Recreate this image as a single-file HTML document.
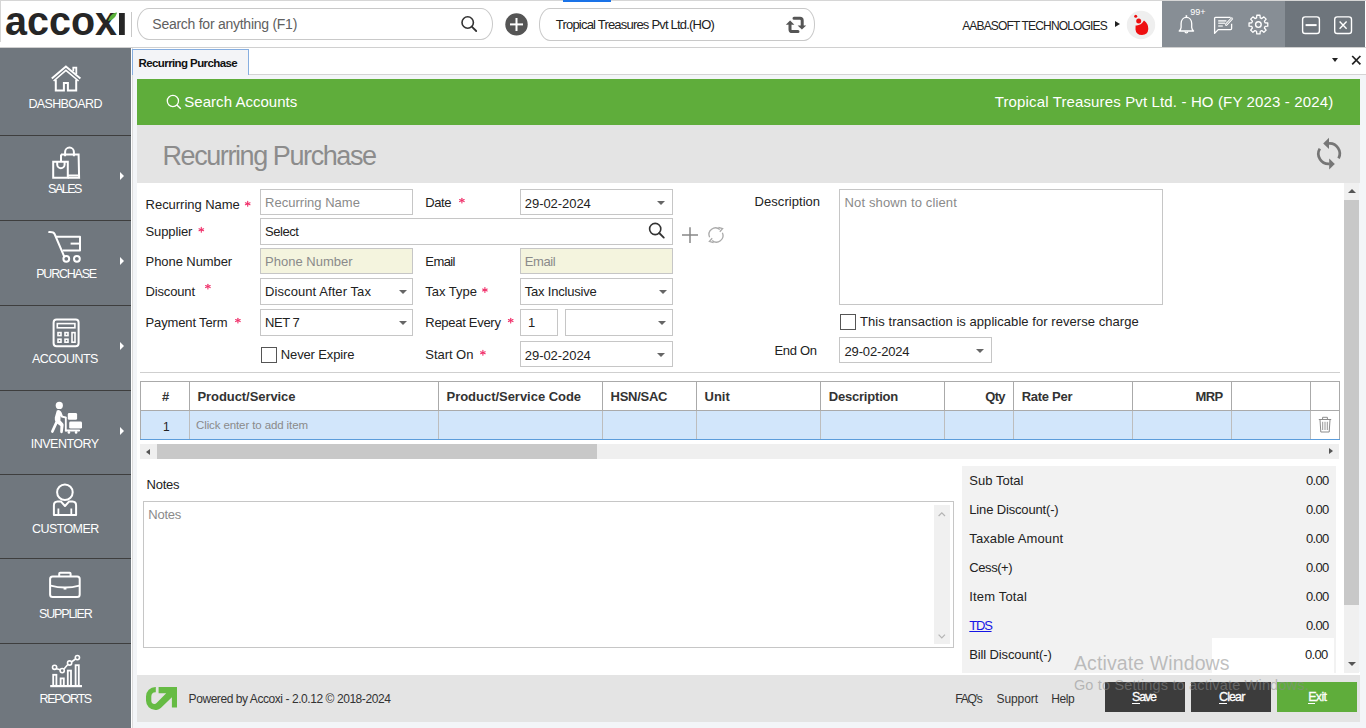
<!DOCTYPE html>
<html><head><meta charset="utf-8">
<style>
*{box-sizing:border-box;margin:0;padding:0}
html,body{width:1366px;height:728px;overflow:hidden;background:#f3f5f8;font-family:"Liberation Sans",sans-serif;color:#222;position:relative}
.a{position:absolute}
.t{position:absolute;white-space:nowrap;line-height:1}
svg{position:absolute;left:0;top:0;overflow:visible}
</style></head><body>
<div class="a" style="left:0px;top:0px;width:1366px;height:47px;background:#fff;"></div>
<div class="a" style="left:0px;top:0px;width:1366px;height:1px;background:#d6d6d6;"></div>
<div class="a" style="left:0px;top:47px;width:1366px;height:1px;background:#d0d0d0;"></div>
<div class="a" style="left:0px;top:0px;width:1px;height:42px;background:#d6d6d6;"></div>
<svg width="1366" height="48" viewBox="0 0 1366 48">
<text x="5" y="35" font-family="Liberation Sans" font-weight="bold" font-size="41" fill="#262626" textLength="112" lengthAdjust="spacingAndGlyphs">accox</text>
<rect x="119" y="13" width="5.8" height="22" fill="#262626"/>
<path d="M108 21 C110 15 113 13 117 12.5 C116 17 113 20 108 21Z" fill="#5bb33a"/>
</svg>
<div class="a" style="left:131px;top:12px;width:1px;height:25px;background:#c8c8c8;"></div>
<div class="a" style="left:137px;top:8px;width:356px;height:32px;background:#fff;border:1px solid #c9c9c9;border-radius:12px / 16px;"></div>
<div class="t" style="left:152.30px;top:17.00px;font-size:14px;color:#606060;letter-spacing:-0.259px;">Search for anything (F1)</div>
<svg width="1366" height="48"><circle cx="467.7" cy="22.5" r="5.7" fill="none" stroke="#333" stroke-width="1.6"/><line x1="471.8" y1="26.6" x2="476.2" y2="31" stroke="#333" stroke-width="1.8" stroke-linecap="round"/>
<circle cx="516.5" cy="24.4" r="11.2" fill="#555"/><rect x="510" y="23.4" width="13" height="2" fill="#fff"/><rect x="515.5" y="18" width="2" height="13" fill="#fff"/>
<path d="M794 18.2 H800 Q802.2 18.2 802.2 20.4 V26" fill="none" stroke="#555" stroke-width="3" stroke-linecap="round"/>
<path d="M797.6 25.4 H806.2 L801.9 29.4 Z" fill="#555"/>
<path d="M790 24.8 V29.4 Q790 31.6 792.2 31.6 H798" fill="none" stroke="#555" stroke-width="3" stroke-linecap="round"/>
<path d="M785.8 24.6 H794.4 L790.1 20.4 Z" fill="#555"/>
</svg>
<div class="a" style="left:539px;top:8px;width:276px;height:33px;background:#fff;border:1px solid #c9c9c9;border-radius:11px / 16px;"></div>
<svg width="1366" height="48" style="z-index:1">
<path d="M794 18.2 H800 Q802.2 18.2 802.2 20.4 V26" fill="none" stroke="#555" stroke-width="3" stroke-linecap="round"/>
<path d="M797.6 25.4 H806.2 L801.9 29.6 Z" fill="#555"/>
<path d="M790 25 V29.4 Q790 31.6 792.2 31.6 H798" fill="none" stroke="#555" stroke-width="3" stroke-linecap="round"/>
<path d="M785.8 24.8 H794.4 L790.1 20.4 Z" fill="#555"/>
</svg>
<div class="t" style="left:555.80px;top:18.00px;font-size:13px;color:#222;letter-spacing:-0.800px;">Tropical Treasures Pvt Ltd.(HO)</div>
<div class="a" style="left:563px;top:0px;width:48px;height:2px;background:#1a73e8;"></div>
<div class="t" style="left:962.20px;top:20.00px;font-size:12px;color:#222;letter-spacing:-0.833px;">AABASOFT TECHNOLOGIES</div>
<div class="a" style="left:1115px;top:21.4px;width:0;height:0;border-left:5px solid #222;border-top:3.8px solid transparent;border-bottom:3.8px solid transparent"></div>
<svg width="1366" height="48">
<circle cx="1141" cy="25" r="14.2" fill="#efefef"/>
<path d="M1135.6 25.4 Q1140.4 26.2 1144 20.6 Q1148.5 23.8 1148.3 29 Q1147.9 34.8 1142 35 Q1135.9 34.8 1135.5 29.4 Z" fill="#ee0f10"/>
<circle cx="1138.7" cy="20.9" r="2.5" fill="#ee0f10"/>
<circle cx="1135.7" cy="16.3" r="1.5" fill="#ee0f10"/>
</svg>
<div class="a" style="left:1162px;top:1px;width:123px;height:46px;background:#878e95;"></div>
<div class="a" style="left:1285px;top:1px;width:80px;height:46px;background:#6e757c;"></div>
<div class="t" style="left:1190.20px;top:8.00px;font-size:9px;color:#fff;letter-spacing:0.018px;">99+</div>
<svg width="1366" height="48" fill="none" stroke="#fff" stroke-width="1.4">
<path d="M1179.2 31 Q1180.9 29.8 1181.1 27.4 V23.6 C1181.1 19.9 1183.4 17.3 1186.4 17.3 C1189.4 17.3 1191.7 19.9 1191.7 23.6 V27.4 Q1191.9 29.8 1193.6 31 Z" stroke-linejoin="round" stroke-width="1.3"/>
<path d="M1186.4 15.2 V17.3" stroke-width="1.6"/>
<path d="M1185 31.4 A1.4 1.4 0 0 0 1187.8 31.4" stroke-width="1.2"/>
<path d="M1231.6 23.8 V28.6 Q1231.6 29.6 1230.6 29.6 H1218.2 L1214.6 33.4 V18.2 Q1214.6 17.3 1215.5 17.3 H1230.6" stroke-linejoin="round" stroke-width="1.3"/>
<path d="M1218.2 20.9 H1226.4 M1218.2 23.3 H1225.2 M1218.2 26 H1222.8" stroke="#e4e6e8" stroke-width="1.6"/>
<path d="M1226.2 24.6 L1231.8 18.6" stroke-width="2.6" stroke-linecap="round"/>
<path d="M1226.2 24.6 L1231.8 18.6" stroke="#878e95" stroke-width="0.9" stroke-linecap="round"/>
<circle cx="1258.4" cy="24.6" r="2.8"/>
<path d="M1256.56 17.95 L1256.79 15.24 L1260.01 15.24 L1260.24 17.95 L1261.80 18.60 L1263.88 16.84 L1266.16 19.12 L1264.40 21.20 L1265.05 22.76 L1267.76 22.99 L1267.76 26.21 L1265.05 26.44 L1264.40 28.00 L1266.16 30.08 L1263.88 32.36 L1261.80 30.60 L1260.24 31.25 L1260.01 33.96 L1256.79 33.96 L1256.56 31.25 L1255.00 30.60 L1252.92 32.36 L1250.64 30.08 L1252.40 28.00 L1251.75 26.44 L1249.04 26.21 L1249.04 22.99 L1251.75 22.76 L1252.40 21.20 L1250.64 19.12 L1252.92 16.84 L1255.00 18.60 Z" stroke-linejoin="round" stroke-width="1.3"/>
<rect x="1302.6" y="16.9" width="16.8" height="16.6" rx="2.6"/>
<path d="M1305.6 25.1 H1316.6" stroke-width="2"/>
<rect x="1334.7" y="16.9" width="16.8" height="16.6" rx="2.6"/>
<path d="M1339.6 21.6 L1346.6 28.8 M1346.6 21.6 L1339.6 28.8" stroke-width="1.4"/>
</svg>
<div class="a" style="left:0px;top:48px;width:131px;height:680px;background:#70777e;"></div>
<div class="a" style="left:131px;top:48px;width:1px;height:680px;background:#fff;"></div>
<div class="a" style="left:132px;top:48px;width:1px;height:680px;background:#dcdcdc;"></div>
<div class="a" style="left:0px;top:135px;width:131px;height:1px;background:#3e3e3e;"></div>
<div class="a" style="left:0px;top:220px;width:131px;height:1px;background:#3e3e3e;"></div>
<div class="a" style="left:0px;top:305px;width:131px;height:1px;background:#3e3e3e;"></div>
<div class="a" style="left:0px;top:390px;width:131px;height:1px;background:#3e3e3e;"></div>
<div class="a" style="left:0px;top:474px;width:131px;height:1px;background:#3e3e3e;"></div>
<div class="a" style="left:0px;top:558px;width:131px;height:1px;background:#3e3e3e;"></div>
<div class="a" style="left:0px;top:643px;width:131px;height:1px;background:#3e3e3e;"></div>
<div class="t" style="left:28.40px;top:98.00px;font-size:12.5px;color:#fff;letter-spacing:-0.636px;">DASHBOARD</div>
<div class="t" style="left:48.10px;top:183.00px;font-size:12.5px;color:#fff;letter-spacing:-1.525px;">SALES</div>
<div class="t" style="left:36.20px;top:268.00px;font-size:12.5px;color:#fff;letter-spacing:-1.209px;">PURCHASE</div>
<div class="t" style="left:32.00px;top:353.00px;font-size:12.5px;color:#fff;letter-spacing:-0.534px;">ACCOUNTS</div>
<div class="t" style="left:30.80px;top:438.00px;font-size:12.5px;color:#fff;letter-spacing:-0.509px;">INVENTORY</div>
<div class="t" style="left:32.00px;top:523.00px;font-size:12.5px;color:#fff;letter-spacing:-0.586px;">CUSTOMER</div>
<div class="t" style="left:39.10px;top:608.00px;font-size:12.5px;color:#fff;letter-spacing:-1.175px;">SUPPLIER</div>
<div class="t" style="left:39.50px;top:693.00px;font-size:12.5px;color:#fff;letter-spacing:-1.250px;">REPORTS</div>
<div class="a" style="left:120px;top:172px;width:0;height:0;border-left:4.5px solid #fff;border-top:4px solid transparent;border-bottom:4px solid transparent"></div>
<div class="a" style="left:120px;top:257px;width:0;height:0;border-left:4.5px solid #fff;border-top:4px solid transparent;border-bottom:4px solid transparent"></div>
<div class="a" style="left:120px;top:342px;width:0;height:0;border-left:4.5px solid #fff;border-top:4px solid transparent;border-bottom:4px solid transparent"></div>
<div class="a" style="left:120px;top:427px;width:0;height:0;border-left:4.5px solid #fff;border-top:4px solid transparent;border-bottom:4px solid transparent"></div>
<svg width="1366" height="728" fill="none" stroke="#fff" stroke-width="2">
<!-- house -->
<path d="M51.8 78.6 L65.9 66.6 L80.4 78.6" stroke-width="2" />
<path d="M53.6 81 L65.9 70.4 L78.6 81" stroke-width="1.6"/>
<path d="M55.8 79.5 V90.4 H63.9 V82.9 H67.9 V90.4 H76.2 V79.5" />
<path d="M73.3 71.2 V67.6 H76.3 V74" stroke-width="1.8"/>
<!-- sales -->
<path d="M53.2 161.8 H67.8 V177.8 H53.2 Z"/>
<path d="M61 154.5 H78.6 L79.1 177.8 H67.8" />
<path d="M67.8 175.5 H79" />
<path d="M57.2 162 V164.5 A3.7 3.7 0 0 0 64.6 164.5 V162"/>
<path d="M61 161.8 V154.5" />
<path d="M65.1 156.2 V152 A4.4 4.4 0 0 1 73.9 152 V156.2"/>
<!-- purchase -->
<path d="M49.2 232.1 Q53.4 231.9 54.6 234 L64.2 256.5 " stroke-linecap="round"/>
<path d="M55.3 236.7 H80 V250.6 H62.6" stroke-linejoin="round"/>
<path d="M70.6 243.6 H80"/>
<circle cx="66.3" cy="258.8" r="2.9"/>
<circle cx="76.9" cy="258.8" r="2.9"/>
<!-- accounts -->
<rect x="53.6" y="319.6" width="25" height="26.6" rx="3"/>
<rect x="57.3" y="323.6" width="17.6" height="4.2" stroke-width="1.6"/>
<rect x="58" y="332.6" width="3" height="3" stroke-width="1.6"/>
<rect x="65" y="332.6" width="3" height="3" stroke-width="1.6"/>
<rect x="58" y="339.2" width="3" height="3" stroke-width="1.6"/>
<rect x="65" y="339.2" width="3" height="3" stroke-width="1.6"/>
<rect x="72" y="332.6" width="3" height="9.6" stroke-width="1.6"/>
<!-- customer -->
<circle cx="64.9" cy="492.3" r="7.8"/>
<path d="M53.9 515 V505.5 Q53.9 501.8 57.5 501.6 L60.8 501.4 L65 506 L69.2 501.4 L72.5 501.6 Q76.1 501.8 76.1 505.5 V515 Z" stroke-linejoin="round"/>
<path d="M58.4 508.4 V514 M71.3 508.4 V514" stroke-width="1.8"/>
<!-- supplier -->
<rect x="50.1" y="576.4" width="29.6" height="20.6" rx="2.5"/>
<path d="M59.2 576.3 V573.8 Q59.2 572.8 60.2 572.8 H69.6 Q70.6 572.8 70.6 573.8 V576.3" />
<path d="M50.6 585.6 Q65 589.4 79.4 585.6" />
<rect x="63.6" y="587.2" width="2.8" height="2.4" fill="#fff" stroke="none"/>
<!-- reports -->
<path d="M50.2 686.1 H82" stroke-width="2.2"/>
<rect x="53.2" y="674.8" width="3.2" height="11" stroke-width="1.8"/>
<rect x="60.6" y="678.4" width="3.2" height="7.4" stroke-width="1.8"/>
<rect x="67.8" y="670.6" width="3.2" height="15.2" stroke-width="1.8"/>
<rect x="75.6" y="665.2" width="3.2" height="20.6" stroke-width="1.8"/>
<path d="M56.4 668.8 L60.4 669.8 M64 669 L67.8 664.6 M71.4 662 L75.5 659" stroke-width="1.6"/>
<circle cx="54.6" cy="667.3" r="2.1" stroke-width="1.6"/>
<circle cx="62.2" cy="670.6" r="2.1" stroke-width="1.6"/>
<circle cx="69.6" cy="663" r="2.1" stroke-width="1.6"/>
<circle cx="77.4" cy="657.6" r="2.1" stroke-width="1.6"/>
</svg>
<svg width="1366" height="728" fill="#fff" stroke="none">
<circle cx="59.3" cy="405.4" r="3.6"/>
<path d="M56.8 410.6 Q58 409.8 59.4 410.2 Q61 410.8 61.6 412.6 L62.8 415.8 L65.6 416.4 Q66.6 416.7 66.2 417.8 Q65.8 418.6 64.8 418.3 L61.4 417.6 L60.6 416 L60.4 420.4 L63 423.2 Q63.8 424.2 63.6 425.4 L62.8 432 Q62.6 433.3 61.4 433.3 Q60.2 433.2 60.2 431.8 L60.4 426 L57.4 423.8 L53.6 432 Q52.9 433.3 51.8 432.8 Q50.6 432.2 51.2 430.8 L55.4 421.6 Q54.6 420 54.8 417.4 Z"/>
<rect x="67.8" y="413" width="9.3" height="6.8" rx="1.4"/>
<rect x="69.2" y="421.6" width="12.8" height="7" rx="1.4"/>
<rect x="64.9" y="416.8" width="1.8" height="14.6"/>
<rect x="64.9" y="429.6" width="15.2" height="1.8" rx="0.8"/>
<circle cx="68.9" cy="432.4" r="1.3"/>
<circle cx="76.1" cy="432.4" r="1.3"/>
</svg>
<div class="a" style="left:133px;top:48px;width:1233px;height:27px;background:#fff;"></div>
<div class="a" style="left:133px;top:74px;width:1233px;height:1px;background:#d4d4d4;"></div>
<div class="a" style="left:132px;top:49px;width:117px;height:26px;background:#f3f4f7;border:1px solid #86aee0;border-bottom:none"></div>
<div class="t" style="left:138.50px;top:58.00px;font-size:11.5px;color:#111;font-weight:bold;letter-spacing:-0.593px;">Recurring Purchase</div>
<div class="a" style="left:1331.65px;top:58.0px;width:0;height:0;border-top:4px solid #222;border-left:3.75px solid transparent;border-right:3.75px solid transparent"></div>
<svg width="1366" height="728"><path d="M1352.2 56 L1360.4 64.4 M1360.4 56 L1352.2 64.4" stroke="#222" stroke-width="1.7"/></svg>
<div class="a" style="left:137px;top:79px;width:1223px;height:46px;background:#5fad3b;"></div>
<svg width="1366" height="728"><circle cx="172.9" cy="101" r="5.6" fill="none" stroke="#fff" stroke-width="1.3"/><line x1="176.9" y1="105" x2="180.8" y2="108.8" stroke="#fff" stroke-width="1.4"/></svg>
<div class="t" style="left:184.30px;top:94.00px;font-size:15px;color:#fff;letter-spacing:0.031px;">Search Accounts</div>
<div class="t" style="left:994.70px;top:94.00px;font-size:15px;color:#fff;letter-spacing:0.140px;">Tropical Treasures Pvt Ltd. - HO (FY 2023 - 2024)</div>
<div class="a" style="left:137px;top:125px;width:1223px;height:58px;background:#e4e4e4;"></div>
<div class="t" style="left:162.50px;top:143.00px;font-size:27px;color:#8c8c8c;letter-spacing:-1.418px;">Recurring Purchase</div>
<svg width="1366" height="728" fill="none" stroke="#767676" stroke-width="2.7">
<path d="M1328.6 143.5 A10.2 10.2 0 0 1 1338.6 158.4" />
<path d="M1319.8 148.6 A10.2 10.2 0 0 0 1329.6 163.9" />
<path d="M1323.2 143.4 L1329 137.8 L1329 149 Z" fill="#767676" stroke="none"/>
<path d="M1334.8 164 L1329.2 158.4 L1329.2 169.6 Z" fill="#767676" stroke="none"/>
</svg>
<div class="a" style="left:137px;top:183px;width:1207px;height:489px;background:#fff;"></div>
<div class="a" style="left:137px;top:672px;width:1223px;height:3px;background:#fff;"></div>
<div class="a" style="left:1344px;top:183px;width:15px;height:490px;background:#f0f0f0;"></div>
<div class="a" style="left:1344px;top:200px;width:15px;height:405px;background:#c8c8c8;"></div>
<div class="a" style="left:1347.5px;top:188.6px;width:0;height:0;border-bottom:4px solid #555;border-left:4px solid transparent;border-right:4px solid transparent"></div>
<div class="a" style="left:1348.3px;top:661.8px;width:0;height:0;border-top:4px solid #555;border-left:4.0px solid transparent;border-right:4.0px solid transparent"></div>
<div class="t" style="left:145.60px;top:198.00px;font-size:13px;color:#222;letter-spacing:-0.034px;">Recurring Name</div>
<div class="t" style="left:145.60px;top:225.00px;font-size:13px;color:#222;letter-spacing:-0.142px;">Supplier</div>
<div class="t" style="left:145.60px;top:255.00px;font-size:13px;color:#222;letter-spacing:-0.076px;">Phone Number</div>
<div class="t" style="left:145.60px;top:285.00px;font-size:13px;color:#222;letter-spacing:-0.169px;">Discount</div>
<div class="t" style="left:145.60px;top:316.00px;font-size:13px;color:#222;letter-spacing:-0.151px;">Payment Term</div>
<div class="t" style="left:425.30px;top:196.00px;font-size:13px;color:#222;letter-spacing:-0.452px;">Date</div>
<div class="t" style="left:425.30px;top:255.00px;font-size:13px;color:#222;letter-spacing:-0.578px;">Email</div>
<div class="t" style="left:425.30px;top:285.00px;font-size:13px;color:#222;letter-spacing:-0.013px;">Tax Type</div>
<div class="t" style="left:425.30px;top:316.00px;font-size:13px;color:#222;letter-spacing:-0.288px;">Repeat Every</div>
<div class="t" style="left:425.30px;top:348.00px;font-size:13px;color:#222;letter-spacing:-0.045px;">Start On</div>
<div class="t" style="left:754.60px;top:195.00px;font-size:13px;color:#222;letter-spacing:0.047px;">Description</div>
<div class="t" style="left:774.40px;top:344.00px;font-size:13px;color:#222;letter-spacing:-0.297px;">End On</div>
<svg width="1366" height="728"><g stroke="#f0306a" stroke-width="1.1" stroke-linecap="round"><path d="M247.70 201.40 V206.20"/><path d="M245.40 202.80 L250.00 204.80"/><path d="M250.00 202.80 L245.40 204.80"/></g></svg>
<svg width="1366" height="728"><g stroke="#f0306a" stroke-width="1.1" stroke-linecap="round"><path d="M201.30 227.40 V232.20"/><path d="M199.00 228.80 L203.60 230.80"/><path d="M203.60 228.80 L199.00 230.80"/></g></svg>
<svg width="1366" height="728"><g stroke="#f0306a" stroke-width="1.1" stroke-linecap="round"><path d="M207.90 284.20 V289.00"/><path d="M205.60 285.60 L210.20 287.60"/><path d="M210.20 285.60 L205.60 287.60"/></g></svg>
<svg width="1366" height="728"><g stroke="#f0306a" stroke-width="1.1" stroke-linecap="round"><path d="M237.90 318.20 V323.00"/><path d="M235.60 319.60 L240.20 321.60"/><path d="M240.20 319.60 L235.60 321.60"/></g></svg>
<svg width="1366" height="728"><g stroke="#f0306a" stroke-width="1.1" stroke-linecap="round"><path d="M461.90 198.20 V203.00"/><path d="M459.60 199.60 L464.20 201.60"/><path d="M464.20 199.60 L459.60 201.60"/></g></svg>
<svg width="1366" height="728"><g stroke="#f0306a" stroke-width="1.1" stroke-linecap="round"><path d="M484.90 287.60 V292.40"/><path d="M482.60 289.00 L487.20 291.00"/><path d="M487.20 289.00 L482.60 291.00"/></g></svg>
<svg width="1366" height="728"><g stroke="#f0306a" stroke-width="1.1" stroke-linecap="round"><path d="M510.70 318.20 V323.00"/><path d="M508.40 319.60 L513.00 321.60"/><path d="M513.00 319.60 L508.40 321.60"/></g></svg>
<svg width="1366" height="728"><g stroke="#f0306a" stroke-width="1.1" stroke-linecap="round"><path d="M482.90 350.40 V355.20"/><path d="M480.60 351.80 L485.20 353.80"/><path d="M485.20 351.80 L480.60 353.80"/></g></svg>
<div class="a" style="left:260px;top:189px;width:153px;height:26px;background:#fff;border:1px solid #c6c6c6;"></div>
<div class="a" style="left:520px;top:189px;width:153px;height:26px;background:#fff;border:1px solid #c6c6c6;"></div>
<div class="a" style="left:260px;top:218px;width:413px;height:27px;background:#fff;border:1px solid #c6c6c6;"></div>
<div class="a" style="left:260px;top:248px;width:153px;height:26px;background:#f4f4de;border:1px solid #c6c6c6;"></div>
<div class="a" style="left:520px;top:248px;width:153px;height:26px;background:#f4f4de;border:1px solid #c6c6c6;"></div>
<div class="a" style="left:260px;top:278px;width:153px;height:27px;background:#fff;border:1px solid #c6c6c6;"></div>
<div class="a" style="left:520px;top:278px;width:153px;height:27px;background:#fff;border:1px solid #c6c6c6;"></div>
<div class="a" style="left:260px;top:309px;width:153px;height:27px;background:#fff;border:1px solid #c6c6c6;"></div>
<div class="a" style="left:520px;top:309px;width:38px;height:27px;background:#fff;border:1px solid #c6c6c6;"></div>
<div class="a" style="left:565px;top:309px;width:108px;height:27px;background:#fff;border:1px solid #c6c6c6;"></div>
<div class="a" style="left:520px;top:341px;width:153px;height:26px;background:#fff;border:1px solid #c6c6c6;"></div>
<div class="a" style="left:839px;top:189px;width:324px;height:116px;background:#fff;border:1px solid #c6c6c6;"></div>
<div class="a" style="left:839px;top:337px;width:153px;height:26px;background:#fff;border:1px solid #c6c6c6;"></div>
<div class="a" style="left:261px;top:347px;width:16px;height:16px;background:#fff;border:1px solid #555;"></div>
<div class="a" style="left:840px;top:314px;width:16px;height:16px;background:#fff;border:1px solid #555;"></div>
<div class="t" style="left:265.10px;top:196.00px;font-size:13px;color:#8a8a8a;letter-spacing:0.012px;">Recurring Name</div>
<div class="t" style="left:524.80px;top:197.00px;font-size:13px;color:#222;letter-spacing:-0.055px;">29-02-2024</div>
<div class="t" style="left:265.10px;top:225.00px;font-size:13px;color:#222;letter-spacing:-0.465px;">Select</div>
<div class="t" style="left:265.10px;top:255.00px;font-size:13px;color:#8a8a8a;letter-spacing:-0.003px;">Phone Number</div>
<div class="t" style="left:524.80px;top:255.00px;font-size:13px;color:#8a8a8a;letter-spacing:-0.428px;">Email</div>
<div class="t" style="left:265.10px;top:285.00px;font-size:13px;color:#222;letter-spacing:0.075px;">Discount After Tax</div>
<div class="t" style="left:524.80px;top:285.00px;font-size:13px;color:#222;letter-spacing:-0.202px;">Tax Inclusive</div>
<div class="t" style="left:265.10px;top:316.00px;font-size:13px;color:#222;letter-spacing:-0.502px;">NET 7</div>
<div class="t" style="left:528.10px;top:316.00px;font-size:13px;color:#222;">1</div>
<div class="t" style="left:524.80px;top:349.00px;font-size:13px;color:#222;letter-spacing:-0.055px;">29-02-2024</div>
<div class="t" style="left:280.80px;top:348.00px;font-size:13px;color:#222;letter-spacing:-0.140px;">Never Expire</div>
<div class="t" style="left:844.50px;top:196.00px;font-size:13px;color:#8a8a8a;letter-spacing:0.137px;">Not shown to client</div>
<div class="t" style="left:860.10px;top:315.00px;font-size:13px;color:#222;letter-spacing:0.054px;">This transaction is applicable for reverse charge</div>
<div class="t" style="left:844.50px;top:345.00px;font-size:13px;color:#222;letter-spacing:-0.155px;">29-02-2024</div>
<div class="a" style="left:656.5px;top:201.0px;width:0;height:0;border-top:4px solid #666;border-left:4.0px solid transparent;border-right:4.0px solid transparent"></div>
<div class="a" style="left:398.5px;top:289.5px;width:0;height:0;border-top:4px solid #666;border-left:4.0px solid transparent;border-right:4.0px solid transparent"></div>
<div class="a" style="left:658.5px;top:290.0px;width:0;height:0;border-top:4px solid #666;border-left:4.0px solid transparent;border-right:4.0px solid transparent"></div>
<div class="a" style="left:398.5px;top:320.5px;width:0;height:0;border-top:4px solid #666;border-left:4.0px solid transparent;border-right:4.0px solid transparent"></div>
<div class="a" style="left:658.4px;top:320.8px;width:0;height:0;border-top:4px solid #666;border-left:4.0px solid transparent;border-right:4.0px solid transparent"></div>
<div class="a" style="left:656.5px;top:353.0px;width:0;height:0;border-top:4px solid #666;border-left:4.0px solid transparent;border-right:4.0px solid transparent"></div>
<div class="a" style="left:975.5px;top:349.0px;width:0;height:0;border-top:4px solid #666;border-left:4.0px solid transparent;border-right:4.0px solid transparent"></div>
<svg width="1366" height="728">
<circle cx="655.2" cy="229" r="5.6" fill="none" stroke="#333" stroke-width="1.6"/><line x1="659.2" y1="233" x2="663.8" y2="237.6" stroke="#333" stroke-width="1.8" stroke-linecap="round"/>
<path d="M682 235 H698 M690 227.2 V243" stroke="#888" stroke-width="1.5"/>
<path d="M709.6 237.2 A6.6 6.6 0 0 1 719.8 229.4" fill="none" stroke="#aaa" stroke-width="1.3"/>
<path d="M722.4 232.8 A6.6 6.6 0 0 1 712.2 240.6" fill="none" stroke="#aaa" stroke-width="1.3"/>
<path d="M718.4 227.4 L722.6 228.6 L719.8 231.8" fill="none" stroke="#aaa" stroke-width="1.3"/>
<path d="M713.6 242.6 L709.4 241.4 L712.2 238.2" fill="none" stroke="#aaa" stroke-width="1.3"/>
</svg>
<div class="a" style="left:140px;top:372px;width:1200px;height:1px;background:#cfcfcf;"></div>
<div class="a" style="left:140px;top:381px;width:1200px;height:59px;background:#fff;border:1px solid #aaa;"></div>
<div class="a" style="left:141px;top:411px;width:1169px;height:28px;background:#d2e6fb;"></div>
<div class="a" style="left:140px;top:410px;width:1200px;height:1px;background:#aaa;"></div>
<div class="a" style="left:140px;top:439px;width:1200px;height:1px;background:#5c9ddb;"></div>
<div class="a" style="left:189px;top:382px;width:1px;height:28px;background:#aaa;"></div>
<div class="a" style="left:189px;top:411px;width:1px;height:28px;background:#bdbdbd;"></div>
<div class="a" style="left:438px;top:382px;width:1px;height:28px;background:#aaa;"></div>
<div class="a" style="left:438px;top:411px;width:1px;height:28px;background:#bdbdbd;"></div>
<div class="a" style="left:602px;top:382px;width:1px;height:28px;background:#aaa;"></div>
<div class="a" style="left:602px;top:411px;width:1px;height:28px;background:#bdbdbd;"></div>
<div class="a" style="left:696px;top:382px;width:1px;height:28px;background:#aaa;"></div>
<div class="a" style="left:696px;top:411px;width:1px;height:28px;background:#bdbdbd;"></div>
<div class="a" style="left:820px;top:382px;width:1px;height:28px;background:#aaa;"></div>
<div class="a" style="left:820px;top:411px;width:1px;height:28px;background:#bdbdbd;"></div>
<div class="a" style="left:944px;top:382px;width:1px;height:28px;background:#aaa;"></div>
<div class="a" style="left:944px;top:411px;width:1px;height:28px;background:#bdbdbd;"></div>
<div class="a" style="left:1013px;top:382px;width:1px;height:28px;background:#aaa;"></div>
<div class="a" style="left:1013px;top:411px;width:1px;height:28px;background:#bdbdbd;"></div>
<div class="a" style="left:1132px;top:382px;width:1px;height:28px;background:#aaa;"></div>
<div class="a" style="left:1132px;top:411px;width:1px;height:28px;background:#bdbdbd;"></div>
<div class="a" style="left:1231px;top:382px;width:1px;height:28px;background:#aaa;"></div>
<div class="a" style="left:1231px;top:411px;width:1px;height:28px;background:#bdbdbd;"></div>
<div class="a" style="left:1310px;top:382px;width:1px;height:28px;background:#aaa;"></div>
<div class="a" style="left:1310px;top:411px;width:1px;height:28px;background:#bdbdbd;"></div>
<div class="t" style="left:162.00px;top:390.00px;font-size:13px;color:#333;font-weight:bold;">#</div>
<div class="t" style="left:197.50px;top:390.00px;font-size:13px;color:#333;font-weight:bold;letter-spacing:-0.070px;">Product/Service</div>
<div class="t" style="left:446.50px;top:390.00px;font-size:13px;color:#333;font-weight:bold;letter-spacing:-0.026px;">Product/Service Code</div>
<div class="t" style="left:610.50px;top:390.00px;font-size:13px;color:#333;font-weight:bold;letter-spacing:-0.252px;">HSN/SAC</div>
<div class="t" style="left:704.50px;top:390.00px;font-size:13px;color:#333;font-weight:bold;">Unit</div>
<div class="t" style="left:828.70px;top:390.00px;font-size:13px;color:#333;font-weight:bold;letter-spacing:-0.191px;">Description</div>
<div class="t" style="left:985.30px;top:390.00px;font-size:13px;color:#333;font-weight:bold;letter-spacing:-0.736px;">Qty</div>
<div class="t" style="left:1021.70px;top:390.00px;font-size:13px;color:#333;font-weight:bold;letter-spacing:-0.279px;">Rate Per</div>
<div class="t" style="left:1195.60px;top:390.00px;font-size:13px;color:#333;font-weight:bold;letter-spacing:-0.643px;">MRP</div>
<div class="t" style="left:163.00px;top:421.00px;font-size:12px;color:#222;">1</div>
<div class="t" style="left:196.00px;top:420.00px;font-size:11.5px;color:#8a8a8a;letter-spacing:-0.110px;">Click enter to add item</div>
<svg width="1366" height="728" fill="none" stroke="#8c8c8c" stroke-width="1">
<path d="M1318.8 419.5 H1331.2 M1322.6 419.3 V417.3 H1327.4 V419.3"/>
<path d="M1320 419.8 L1320.8 432 H1329.2 L1330 419.8"/>
<path d="M1322.7 421.8 V430 M1325 421.8 V430 M1327.3 421.8 V430" stroke-width="0.9"/>
</svg>
<div class="a" style="left:140px;top:444px;width:1199px;height:15px;background:#efefef;"></div>
<div class="a" style="left:157px;top:444px;width:440px;height:15px;background:#c8c8c8;"></div>
<div class="a" style="left:146px;top:449px;width:0;height:0;border-right:4.5px solid #555;border-top:3.8px solid transparent;border-bottom:3.8px solid transparent"></div>
<div class="a" style="left:1329px;top:448px;width:0;height:0;border-left:4.5px solid #555;border-top:3.8px solid transparent;border-bottom:3.8px solid transparent"></div>
<div class="t" style="left:146.50px;top:478.00px;font-size:13px;color:#222;letter-spacing:-0.239px;">Notes</div>
<div class="a" style="left:143px;top:501px;width:811px;height:147px;background:#fff;border:1px solid #c6c6c6;"></div>
<div class="t" style="left:148.30px;top:508.00px;font-size:13px;color:#8a8a8a;letter-spacing:-0.239px;">Notes</div>
<div class="a" style="left:934px;top:505px;width:16px;height:139px;background:#f0f0f0;"></div>
<svg width="1366" height="728" fill="none" stroke="#b4b4b4" stroke-width="1.2">
<path d="M938.6 516 L941.8 512.8 L945 516"/><path d="M938.6 634.6 L941.8 637.8 L945 634.6"/></svg>
<div class="a" style="left:962px;top:466px;width:374px;height:207px;background:#f2f2f2;"></div>
<div class="a" style="left:1212px;top:638px;width:122px;height:35px;background:#fff;"></div>
<div class="t" style="left:969.30px;top:474.00px;font-size:13px;color:#222;letter-spacing:0.030px;">Sub Total</div>
<div class="t" style="left:1306.00px;top:474.00px;font-size:13px;color:#222;letter-spacing:-0.699px;">0.00</div>
<div class="t" style="left:969.30px;top:503.00px;font-size:13px;color:#222;letter-spacing:-0.157px;">Line Discount(-)</div>
<div class="t" style="left:1306.00px;top:503.00px;font-size:13px;color:#222;letter-spacing:-0.699px;">0.00</div>
<div class="t" style="left:969.30px;top:532.00px;font-size:13px;color:#222;letter-spacing:0.099px;">Taxable Amount</div>
<div class="t" style="left:1306.00px;top:532.00px;font-size:13px;color:#222;letter-spacing:-0.699px;">0.00</div>
<div class="t" style="left:969.30px;top:561.00px;font-size:13px;color:#222;letter-spacing:-0.427px;">Cess(+)</div>
<div class="t" style="left:1306.00px;top:561.00px;font-size:13px;color:#222;letter-spacing:-0.699px;">0.00</div>
<div class="t" style="left:969.30px;top:590.00px;font-size:13px;color:#222;letter-spacing:0.164px;">Item Total</div>
<div class="t" style="left:1306.00px;top:590.00px;font-size:13px;color:#222;letter-spacing:-0.699px;">0.00</div>
<div class="t" style="left:969.30px;top:619.00px;font-size:13px;color:#1515e6;letter-spacing:-1.250px;text-decoration:underline;">TDS</div>
<div class="t" style="left:1306.00px;top:619.00px;font-size:13px;color:#222;letter-spacing:-0.699px;">0.00</div>
<div class="t" style="left:969.30px;top:648.00px;font-size:13px;color:#222;letter-spacing:-0.134px;">Bill Discount(-)</div>
<div class="t" style="left:1305.00px;top:648.00px;font-size:13px;color:#222;letter-spacing:-0.699px;">0.00</div>
<div class="a" style="left:137px;top:675px;width:1223px;height:47px;background:#e4e4e4;"></div>
<svg width="1366" height="728">
<path d="M155.8 687.1 H155.4 A9.4 9.4 0 0 0 146 696.5 V700.5 A9.4 9.4 0 0 0 155.4 709.9 H156.6 Q159 709.9 160.8 708.1 L171.9 697.2 V707.4 H177 V687.1 H158.6 V693.3 H166.2 L156.8 702.8 Q155.6 704 154.4 704 Q151.3 704 151.3 700.6 V696.8 Q151.3 692.3 155.4 692.3 H155.8 Z" fill="#66bb44"/>
</svg>
<div class="t" style="left:188.60px;top:693.00px;font-size:12px;color:#333;letter-spacing:-0.435px;">Powered by Accoxi - 2.0.12 © 2018-2024</div>
<div class="t" style="left:955.20px;top:693.00px;font-size:12px;color:#333;letter-spacing:-1.173px;">FAQ's</div>
<div class="t" style="left:996.50px;top:693.00px;font-size:12px;color:#333;letter-spacing:-0.087px;">Support</div>
<div class="t" style="left:1051.30px;top:693.00px;font-size:12px;color:#333;letter-spacing:-0.461px;">Help</div>
<div class="a" style="left:1105px;top:682px;width:80px;height:30px;background:#3c3c3c;"></div>
<div class="a" style="left:1191px;top:682px;width:80px;height:30px;background:#3c3c3c;"></div>
<div class="a" style="left:1277px;top:682px;width:80px;height:30px;background:#5fad3b;"></div>
<div class="t" style="left:1132.10px;top:691.00px;font-size:12.5px;color:#fff;letter-spacing:-1.196px;-webkit-text-stroke:0.3px #fff;">Save</div>
<div class="t" style="left:1219.00px;top:691.00px;font-size:12.5px;color:#fff;letter-spacing:-0.894px;-webkit-text-stroke:0.3px #fff;">Clear</div>
<div class="t" style="left:1308.20px;top:691.00px;font-size:12.5px;color:#fff;letter-spacing:-0.679px;-webkit-text-stroke:0.3px #fff;">Exit</div>
<div class="a" style="left:1132px;top:703px;width:8px;height:1px;background:#fff;"></div>
<div class="a" style="left:1219px;top:703px;width:8px;height:1px;background:#fff;"></div>
<div class="a" style="left:1308px;top:703px;width:7px;height:1px;background:#fff;"></div>
<div class="t" style="left:1073.90px;top:654.00px;font-size:19.5px;color:rgba(140,140,140,0.55);letter-spacing:0.120px;">Activate Windows</div>
<div class="t" style="left:1073.90px;top:678.00px;font-size:14.5px;color:rgba(140,140,140,0.55);letter-spacing:0.174px;">Go to Settings to activate Windows.</div>
</body></html>
